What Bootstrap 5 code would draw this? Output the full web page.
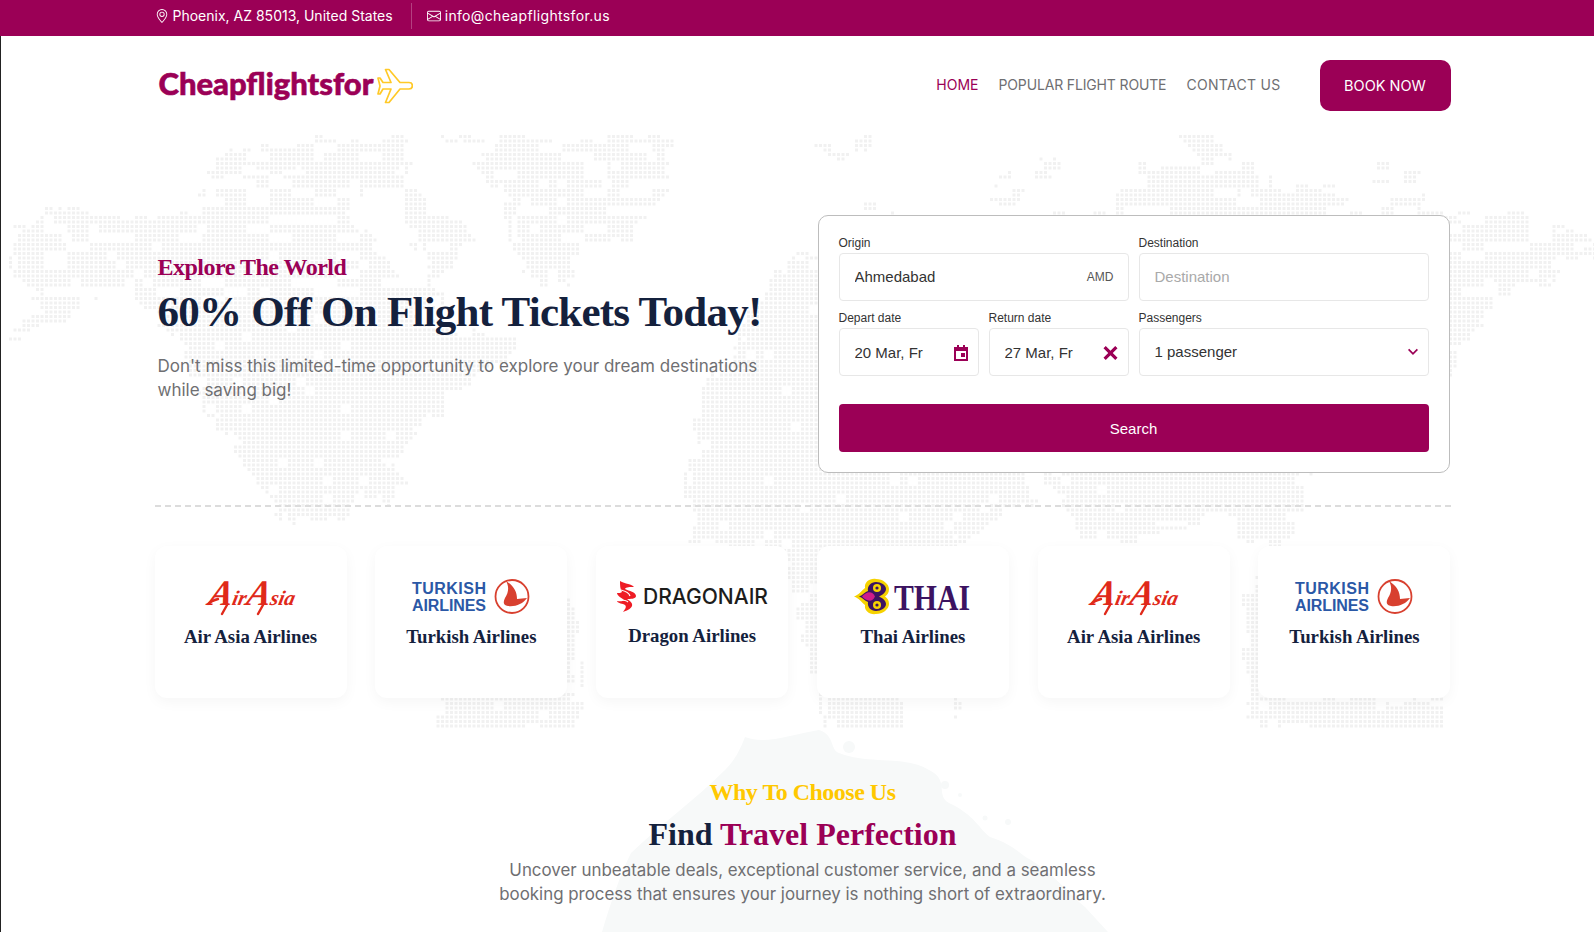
<!DOCTYPE html>
<html lang="en">
<head>
    <meta charset="UTF-8">
    <meta name="viewport" content="width=device-width, initial-scale=1.0">
    <title>Cheapflightsfor</title>
    <link href="https://cdn.jsdelivr.net/npm/bootstrap@5.3.0/dist/css/bootstrap.min.css" rel="stylesheet">
    <style>
        :root { --wine: #9b0056; --navy: #14213d; --grey: #6f6f72; }
        html, body { overflow: hidden; }
        body { position: relative; min-height: 932px; font-family: Inter, "Open Sans", sans-serif; color: var(--grey); background: #fff; }
        .backdrop { position: absolute; top: 0; left: 0; z-index: 0; }
        .top-strip { position: relative; z-index: 1; height: 36px; padding-left: 11px; padding-bottom: 5px; background: var(--wine); color: #fff; font-size: 14px; }
        .top-item { gap: 4px; padding-right: 18px; }
        .top-item + .top-item { padding-left: 15px; padding-right: 0; border-left: 1px solid rgba(255,255,255,.25); height: 26px; letter-spacing: .35px; }
        .page-body { position: relative; z-index: 1; padding-left: 10px; border-left: 1px solid #222; min-height: 896px; }
        .brand-text { font-family: Lato, sans-serif; font-weight: 900; font-size: 31px; color: var(--wine); -webkit-text-stroke: .6px var(--wine); line-height: 1; margin-bottom: 5px; }
        .main-nav { padding: 24px 0; }
        .main-nav .nav-link { padding: 0 10px 2px; font-size: 14px; color: var(--grey); text-transform: uppercase; }
        .main-nav .nav-link.active { color: var(--wine); }
        .main-nav .link-tight { letter-spacing: -.15px; }
        .main-nav .link-wide { letter-spacing: .3px; }
        .book-btn { width: 131px; height: 51px; margin-left: 29px; border-radius: 10px; background: var(--wine); color: #fff; font-size: 14.5px; line-height: 37px; }
        .book-btn:hover { background: #85004a; color: #fff; }
        .hero { padding-top: 80px; padding-bottom: 32px; }
        .hero-copy { width: 640px; padding-top: 37px; padding-left: 3px; }
        .serif { font-family: "Liberation Serif", serif; font-weight: 700; }
        .kicker { font-size: 24px; line-height: 30px; letter-spacing: -.5px; color: var(--wine); margin: 0; }
        .hero-title { font-size: 43px; line-height: 54px; color: var(--navy); margin: 3px 0 15px; letter-spacing: -.75px; white-space: nowrap; }
        .hero-text { width: 615px; font-size: 17px; line-height: 24px; margin: 0; }
        .search-panel { width: 632px; height: 258px; margin-right: 1px; padding: 20px 20px 0; background: #fff; border: 1px solid #bdbdbd; border-radius: 10px; font-family: "Liberation Sans", sans-serif; }
        .search-grid { --bs-gutter-x: 10px; --bs-gutter-y: 10px; }
        .search-panel label { display: block; font-size: 12px; line-height: 14px; margin-bottom: 3px; color: #333; }
        .search-panel .form-control, .search-panel .form-select { height: 48px; padding-left: 15px; padding-bottom: 6px; border: 1px solid #e7e7e7; border-radius: 4px; font-size: 15px; color: #333; background-color: #fff; }
        .search-panel .field-top { padding-bottom: 8px; }
        .search-panel .form-control::placeholder { color: #a9a9a9; }
        .search-panel .form-select { background-image: url("data:image/svg+xml,%3csvg xmlns='http://www.w3.org/2000/svg' viewBox='0 0 16 16'%3e%3cpath fill='none' stroke='%239b0056' stroke-width='2' d='m3 5 5 5 5-5'/%3e%3c/svg%3e"); background-position: right 8px center; background-size: 14px; }
        .field-extra { position: absolute; top: 50%; right: 15px; transform: translateY(-50%); font-size: 12px; color: #555; }
        .field-icon { right: 11px; margin-top: 1px; }
        .search-btn { height: 48px; margin-top: 28px; padding-top: 8px; border: 0; border-radius: 4px; background: var(--wine); color: #fff; font-size: 15px; }
        .search-btn:hover { background: #85004a; color: #fff; }
        .dash-line { border-top: 2px dashed #dcdcdc; }
        .airline-grid { display: grid; grid-template-columns: repeat(6, 192px); justify-content: space-between; margin-top: 39px; }
        .airline-card { height: 152px; padding-top: 32px; text-align: center; background: #fff; border-radius: 12px; box-shadow: 0 4px 14px rgba(0,0,0,.04); }
        .airline-card svg { display: block; margin: 0 auto; overflow: visible; }
        .airline-name { font-size: 18.8px; line-height: 24px; color: var(--navy); margin: 10px 0 0; }
        .why-block { margin-top: 79px; text-align: center; }
        .why-kicker { font-size: 24px; line-height: 30px; letter-spacing: -.5px; color: #ffc800; margin: 0; }
        .why-title { font-size: 32px; line-height: 44px; color: var(--navy); margin: 5px 0 2px; }
        .why-title span { color: var(--wine); }
        .why-text { font-size: 16.9px; line-height: 24px; margin: 0; }
    </style>
</head>
<body>

    <!-- background map and splash -->
    <svg class="backdrop" width="1594" height="932" viewBox="0 0 1594 932" aria-hidden="true">
        <defs>
            <symbol id="logo-airasia" viewBox="0 0 86 37" overflow="visible">
                <path d="M0 26C3 23 6 22 10 21M19 27L14 36M55 27L50 36" fill="none" stroke="#e0291a" stroke-width="2.400" stroke-linecap="round"/>
                <text x="0" y="27" transform="skewX(-12) translate(5 0)" fill="#e0291a" font-family="Liberation Serif, serif" font-style="italic" font-weight="700" font-size="21"><tspan font-size="36">A</tspan>ir<tspan font-size="36">A</tspan>sia</text>
            </symbol>
            <symbol id="logo-turkish" viewBox="0 0 120 37" overflow="visible">
                <text x="1" y="16" fill="#2b58a6" font-family="Liberation Sans, sans-serif" font-weight="700" font-size="16" textLength="74">TURKISH</text>
                <text x="1" y="33" fill="#2b58a6" font-family="Liberation Sans, sans-serif" font-weight="700" font-size="16" textLength="74">AIRLINES</text>
                <circle cx="101" cy="18.500" r="16.500" fill="none" stroke="#d8402f" stroke-width="1.800"/>
                <path d="M95 3C103 8 106 14 106 21L116 20C112 26 104 29 97 28C92 27 92 24 94 20C98 14 98 8 95 3Z" fill="#d8402f"/>
            </symbol>
        </defs>
        <path id="worldDots" fill="#f1f1f1"/>
        <g fill="#f7f9f9">
            <path d="M745 737 C765 745 790 735 819 730 C835 735 830 750 839 753 C870 765 905 755 929 770 C950 780 935 795 949 803 C975 815 980 830 990 837 C1015 845 1020 855 1031 860 C1055 875 1070 895 1085 907 L1108 932 L602 932 C610 905 620 875 631 853 C660 825 695 800 725 770 C735 760 740 750 745 737 Z"/>
            <circle cx="849" cy="747" r="6"/>
            <circle cx="945" cy="785" r="4"/>
            <circle cx="1008" cy="822" r="3"/>
            <circle cx="960" cy="795" r="2"/>
            <circle cx="985" cy="818" r="2.500"/>
        </g>
    </svg>

    <div class="top-strip">
        <div class="container h-100 d-flex align-items-center">
            <div class="top-item d-flex align-items-center">
                <svg width="14" height="16" viewBox="0 0 16 16" fill="#fff"><path d="M12.166 8.94c-.524 1.062-1.234 2.12-1.96 3.07A31.493 31.493 0 0 1 8 14.58a31.481 31.481 0 0 1-2.206-2.57c-.726-.95-1.436-2.008-1.96-3.07C3.304 7.867 3 6.862 3 6a5 5 0 0 1 10 0c0 .862-.305 1.867-.834 2.94zM8 16s6-5.686 6-10A6 6 0 0 0 2 6c0 4.314 6 10 6 10z"/><path d="M8 8a2 2 0 1 1 0-4 2 2 0 0 1 0 4zm0 1a3 3 0 1 0 0-6 3 3 0 0 0 0 6z"/></svg>
                <span>Phoenix, AZ 85013, United States</span>
            </div>
            <div class="top-item d-flex align-items-center">
                <svg width="14" height="14" viewBox="0 0 16 16" fill="#fff"><path d="M0 4a2 2 0 0 1 2-2h12a2 2 0 0 1 2 2v8a2 2 0 0 1-2 2H2a2 2 0 0 1-2-2V4Zm2-1a1 1 0 0 0-1 1v.217l7 4.2 7-4.2V4a1 1 0 0 0-1-1H2Zm13 2.383-4.708 2.825L15 11.105V5.383Zm-.034 6.876-5.64-3.471L8 9.583l-1.326-.795-5.64 3.47A1 1 0 0 0 2 13h12a1 1 0 0 0 .966-.741ZM1 11.105l4.708-2.897L1 5.383v5.722Z"/></svg>
                <span>info@cheapflightsfor.us</span>
            </div>
        </div>
    </div>

    <div class="page-body">
        <div class="container">
            <!-- Navbar -->
            <nav class="main-nav d-flex align-items-center justify-content-between">
                <a class="d-flex align-items-center gap-1 text-decoration-none ps-1" href="#">
                    <span class="brand-text">Cheapflightsfor</span>
                    <svg width="36" height="36" viewBox="0 0 36 36" fill="none" stroke="#ffc928" stroke-width="1.7" stroke-linejoin="round"><path d="M32 14.5H23L12 1.5H8.5L14 14.5H6L3 10H1L3 18L1 26H3L6 21H14L8.5 34.5H12L23 21H32C36.5 21 36.5 14.5 32 14.5Z"/></svg>
                </a>
                <div class="d-flex align-items-center">
                    <ul class="nav">
                        <li class="nav-item"><a class="nav-link active" href="#">Home</a></li>
                        <li class="nav-item"><a class="nav-link link-tight" href="#">Popular Flight Route</a></li>
                        <li class="nav-item"><a class="nav-link link-wide" href="#">Contact Us</a></li>
                    </ul>
                    <a class="btn book-btn" href="#">BOOK NOW</a>
                </div>
            </nav>

            <!-- Hero -->
            <section class="hero d-flex justify-content-between">
                <div class="hero-copy">
                    <h5 class="kicker serif">Explore The World</h5>
                    <h1 class="hero-title serif">60% Off On Flight Tickets Today!</h1>
                    <p class="hero-text">Don't miss this limited-time opportunity to explore your dream destinations while saving big!</p>
                </div>
                <form class="search-panel">
                    <div class="row search-grid">
                        <div class="col-6">
                            <label for="origin">Origin</label>
                            <div class="position-relative">
                                <input id="origin" class="form-control field-top" type="text" value="Ahmedabad">
                                <span class="field-extra">AMD</span>
                            </div>
                        </div>
                        <div class="col-6">
                            <label for="destination">Destination</label>
                            <input id="destination" class="form-control field-top" type="text" placeholder="Destination">
                        </div>
                        <div class="col-3">
                            <label for="depart">Depart date</label>
                            <div class="position-relative">
                                <input id="depart" class="form-control" type="text" value="20 Mar, Fr">
                                <svg class="field-extra field-icon" width="14" height="16" viewBox="0 0 14 16" fill="#9b0056"><path d="M3 0h2v2h4V0h2v2h3v14H0V2h3Zm-1 6v8h10V6Zm5 2h4v4H7Z"/></svg>
                            </div>
                        </div>
                        <div class="col-3">
                            <label for="return">Return date</label>
                            <div class="position-relative">
                                <input id="return" class="form-control" type="text" value="27 Mar, Fr">
                                <svg class="field-extra field-icon" width="15" height="15" viewBox="0 0 14 14" fill="none" stroke="#9b0056" stroke-width="3"><path d="M1.5 1.5l11 11M12.500 1.500l-11 11"/></svg>
                            </div>
                        </div>
                        <div class="col-6">
                            <label for="passengers">Passengers</label>
                            <select id="passengers" class="form-select">
                                <option>1 passenger</option>
                                <option>2 passengers</option>
                            </select>
                        </div>
                    </div>
                    <button type="button" class="btn search-btn w-100">Search</button>
                </form>
            </section>

            <div class="dash-line"></div>

            <!-- Airlines -->
            <div class="airline-grid">
                <div class="airline-card">
                    <svg width="86" height="37"><use href="#logo-airasia"/></svg>
                    <h6 class="airline-name serif">Air Asia Airlines</h6>
                </div>
                <div class="airline-card">
                    <svg width="120" height="37"><use href="#logo-turkish"/></svg>
                    <h6 class="airline-name serif">Turkish Airlines</h6>
                </div>
                <div class="airline-card">
                    <svg width="156" height="36" viewBox="0 0 156 36"><path d="M6 3c5 3 12 3 14 6-4 0-8 0-9 2 4 2 11 3 11 7 0 3-6 3-9 3 3 2 6 4 5 7-1 3-6 5-9 6 2-3 4-5 2-7-2-2-7-1-8-4 2 0 5 1 7-1-2-2-7-4-7-7 2 0 4 0 5-1-2-3-2-7-2-11Z" fill="#ee1c25"/><path d="M7 12c4 1 8 3 9 6M6 22c3 0 6 0 8 2" fill="none" stroke="#fff" stroke-width="1.200"/><text x="29" y="26" fill="#1d1d1b" font-family="Inter, sans-serif" font-weight="500" font-size="21" textLength="125" lengthAdjust="spacingAndGlyphs">DRAGONAIR</text></svg>
                    <h6 class="airline-name serif">Dragon Airlines</h6>
                </div>
                <div class="airline-card">
                    <svg width="118" height="37" viewBox="0 0 118 37"><path d="M0 18.500C5 17 8 12 11 10C10 4 16 0 22 1C29 1 35 6 35 11C35 15 33 17 31 18.500C33 20 35 22 35 26C35 31 29 36 22 36C16 37 10 33 11 27C8 25 5 20 0 18.500Z" fill="#f6d200"/><path d="M5 18.500C9 17 11 14 14 13C13 8 17 4 22 4C27 4 32 7 32 11C32 14 29 17 25 18.500C29 20 32 23 32 26C32 30 27 33 22 33C17 33 13 29 14 24C11 23 9 20 5 18.500Z" fill="#3c1361"/><path d="M8 18.500C12 14 18 12 21 18.500C18 25 12 23 8 18.500Z" fill="#cf1b8a"/><circle cx="23" cy="10" r="4" fill="#f6d200"/><circle cx="23" cy="27" r="4" fill="#f6d200"/><circle cx="23" cy="10" r="1.600" fill="#3c1361"/><circle cx="23" cy="27" r="1.600" fill="#3c1361"/><text x="40" y="32" fill="#3c1361" font-family="Liberation Serif, serif" font-weight="700" font-size="36" textLength="76" lengthAdjust="spacingAndGlyphs">THAI</text></svg>
                    <h6 class="airline-name serif">Thai Airlines</h6>
                </div>
                <div class="airline-card">
                    <svg width="86" height="37"><use href="#logo-airasia"/></svg>
                    <h6 class="airline-name serif">Air Asia Airlines</h6>
                </div>
                <div class="airline-card">
                    <svg width="120" height="37"><use href="#logo-turkish"/></svg>
                    <h6 class="airline-name serif">Turkish Airlines</h6>
                </div>
            </div>

            <!-- Why us -->
            <section class="why-block">
                <h5 class="why-kicker serif">Why To Choose Us</h5>
                <h2 class="why-title serif">Find <span>Travel Perfection</span></h2>
                <p class="why-text">Uncover unbeatable deals, exceptional customer service, and a seamless<br>booking process that ensures your journey is nothing short of extraordinary.</p>
            </section>
        </div>
    </div>

    <script src="https://cdn.jsdelivr.net/npm/bootstrap@5.3.0/dist/js/bootstrap.bundle.min.js"></script>
    <script>
        // land shapes of the dotted world map, in page pixels
        const land = [
            [15,227,51,207,102,213,148,220,199,213,196,193,204,180,209,160,260,140,408,137,418,150,398,173,423,197,454,217,480,243,449,257,454,270,428,277,449,290,408,320,510,333,505,357,459,383,444,400,418,423,413,440,383,463,403,493,357,513,306,523,286,523,255,483,240,450,204,407,184,347,128,290,77,297,66,313,20,330,5,333,46,303,15,280,10,247],
            [433,137,670,135,672,165,655,195,650,220,600,245,575,250,575,280,530,280,515,250,505,190,470,150],
            [790,262,830,240,1000,240,1030,300,1030,495,1010,510,960,540,945,548,905,700,905,730,820,730,820,697,780,545,690,540,688,470,700,400,725,360,745,320,765,290],
            [950,697,965,697,965,710,950,710],
            [1112,188,1143,188,1143,165,1263,165,1263,188,1350,188,1350,212,1470,212,1500,212,1500,205,1525,205,1525,215,1557,225,1594,243,1594,257,1560,258,1557,275,1520,285,1490,290,1483,330,1455,345,1440,400,1300,480,1290,540,1240,540,1230,510,1120,540,1075,540,1060,490,1040,480,1040,300,1050,215,1112,212],
            [1245,580,1260,580,1260,697,1440,697,1440,730,1260,730,1245,697],
            [440,560,575,590,575,697,570,730,440,730],
            [1060,158,1060,172,1020,185,1005,215,990,215,995,180,1020,165],
            [803,135,863,135,863,150,845,158,830,158,815,145],
            [1172,135,1226,135,1226,158,1195,158],
            [1367,165,1426,165,1426,178,1367,178],
            [1382,197,1419,197,1419,212,1382,212],
            [866,205,894,205,894,215,866,215]
        ];
        // bays and gaps in the north
        const water = [
            [355,190,385,188,400,225,430,262,395,285,375,245,350,215],
            [205,172,290,168,300,178,210,184],
            [300,540,370,490,385,505,330,545]
        ];

        function inside(poly, x, y) {
            let hit = false;
            for (let i = 0, j = poly.length - 2; i < poly.length; j = i, i += 2) {
                if ((poly[i + 1] > y) !== (poly[j + 1] > y) &&
                    x < (poly[j] - poly[i]) * (y - poly[i + 1]) / (poly[j + 1] - poly[i + 1]) + poly[i]) {
                    hit = !hit;
                }
            }
            return hit;
        }

        function noise(x, y) {
            const v = Math.sin(x * 12.9898 + y * 78.233) * 43758.5453;
            return v - Math.floor(v);
        }

        let dots = '';
        for (let row = 0; row < 132; row++) {
            for (let col = 0; col < 355; col++) {
                const x = col * 4.5;
                const y = 135 + row * 4.5;
                // uneven coast lines and small holes, like the dot map has
                const px = x + (noise(Math.floor(col / 3), Math.floor(row / 3)) - .5) * 14;
                const py = y + (noise(Math.floor(col / 3) + 7, Math.floor(row / 3)) - .5) * 14;
                if (!land.some(p => inside(p, px, py))) continue;
                if (water.some(p => inside(p, px, py))) continue;
                if (y < 300 && noise(Math.floor(col / 5), Math.floor(row / 2)) > .82) continue;
                if (noise(Math.floor(col / 2), Math.floor(row / 2) + 31) > .96) continue;
                dots += `M${x} ${y}h3v3h-3z`;
            }
        }
        document.getElementById('worldDots').setAttribute('d', dots);
    </script>
</body>
</html>
